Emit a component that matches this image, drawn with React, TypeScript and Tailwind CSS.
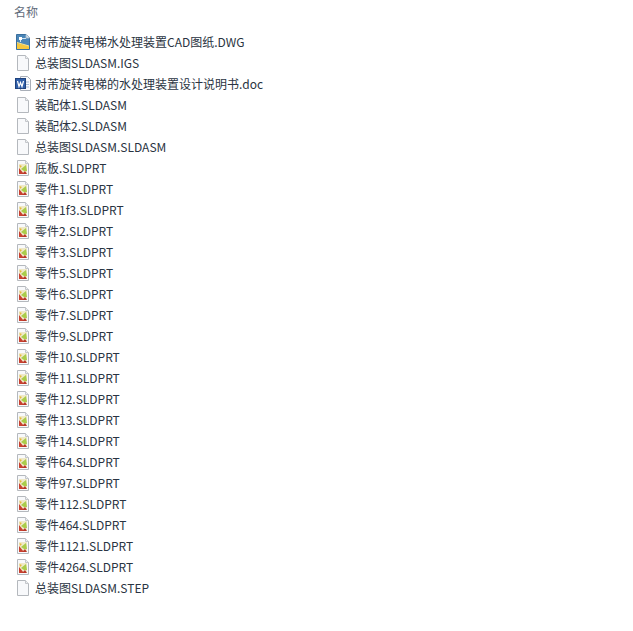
const files = [
  { name: "对芾旋转电梯水处理装置CAD图纸.DWG", kind: "dwg" },
  { name: "总装图SLDASM.IGS", kind: "blank" },
  { name: "对芾旋转电梯的水处理装置设计说明书.doc", kind: "doc" },
  { name: "装配体1.SLDASM", kind: "blank" },
  { name: "装配体2.SLDASM", kind: "blank" },
  { name: "总装图SLDASM.SLDASM", kind: "blank" },
  { name: "底板.SLDPRT", kind: "part" },
  { name: "零件1.SLDPRT", kind: "part" },
  { name: "零件1f3.SLDPRT", kind: "part" },
  { name: "零件2.SLDPRT", kind: "part" },
  { name: "零件3.SLDPRT", kind: "part" },
  { name: "零件5.SLDPRT", kind: "part" },
  { name: "零件6.SLDPRT", kind: "part" },
  { name: "零件7.SLDPRT", kind: "part" },
  { name: "零件9.SLDPRT", kind: "part" },
  { name: "零件10.SLDPRT", kind: "part" },
  { name: "零件11.SLDPRT", kind: "part" },
  { name: "零件12.SLDPRT", kind: "part" },
  { name: "零件13.SLDPRT", kind: "part" },
  { name: "零件14.SLDPRT", kind: "part" },
  { name: "零件64.SLDPRT", kind: "part" },
  { name: "零件97.SLDPRT", kind: "part" },
  { name: "零件112.SLDPRT", kind: "part" },
  { name: "零件464.SLDPRT", kind: "part" },
  { name: "零件1121.SLDPRT", kind: "part" },
  { name: "零件4264.SLDPRT", kind: "part" },
  { name: "总装图SLDASM.STEP", kind: "blank" },
];

function Sheet({ children }: { children?: React.ReactNode }) {
  return (
    <svg width="16" height="16" viewBox="0 0 16 16">
      <path d="M2.5 0.5H10.5L13.5 3.5V15.5H2.5Z" fill="#f8f9fb" stroke="#b4b8bd" />
      <path d="M10.5 0.5V3.5H13.5" fill="#eceef0" stroke="#c4c7cb" />
      {children}
    </svg>
  );
}

function FileIcon({ kind }: { kind: string }) {
  if (kind === "dwg") {
    return (
      <svg width="16" height="16" viewBox="0 0 16 16">
        <path d="M1.5 0.5H11L14.5 4V15.5H1.5Z" fill="#4a86b8" stroke="#3a6f9e" />
        <path d="M11 0.5V4H14.5" fill="#e8eef4" stroke="#9fb6ca" />
        <path d="M2 9L14 12V15H2Z" fill="#f6c83e" />
        <path d="M2 8L14 11.5V12.5L2 9Z" fill="#fbe58f" />
        <path d="M4 3H7V6H4Z" fill="#ffffff" />
        <path d="M7 4.5H11M5.5 6V8" stroke="#d5e6f3" />
      </svg>
    );
  }
  if (kind === "doc") {
    return (
      <svg width="16" height="16" viewBox="0 0 16 16">
        <path d="M5.5 0.5H12.5L15.5 3.5V14.5H5.5Z" fill="#f8f9fb" stroke="#a9afb8" />
        <path d="M11 6H14M11 8.5H14M11 11H14" stroke="#a8bdd8" />
        <rect x="0.5" y="2.5" width="10" height="10" fill="#2f5ea8" stroke="#1f427d" />
        <path d="M2.5 5L4 10.5L5.5 6.5L7 10.5L8.5 5" fill="none" stroke="#ffffff" strokeWidth="1.2" />
      </svg>
    );
  }
  if (kind === "part") {
    return (
      <Sheet>
        <rect x="4" y="4" width="8" height="10" fill="#efe9c8" />
        <path d="M4 14V8L9 14Z" fill="#c8402f" />
        <path d="M7 14L10 11L12 14Z" fill="#b9382a" />
        <path d="M6 9L11 5L12 11L9 11Z" fill="#a9cc4a" />
        <path d="M4.5 5L7 6L5 8Z" fill="#e6b93a" />
      </Sheet>
    );
  }
  return <Sheet />;
}

export default function App() {
  return (
    <div className="min-h-[631px] bg-white font-['Noto_Sans_CJK_SC','Noto_Sans',sans-serif] text-xs">
      <div className="h-[31px] pl-3.5 pt-[3px] leading-[18px] text-[#5f6b7a]">名称</div>
      <ul>
        {files.map((file) => (
          <li key={file.name} className="flex h-[21px] items-center pl-[15px] text-[#2a3442]">
            <FileIcon kind={file.kind} />
            <span className="ml-1 whitespace-nowrap">{file.name}</span>
          </li>
        ))}
      </ul>
    </div>
  );
}
